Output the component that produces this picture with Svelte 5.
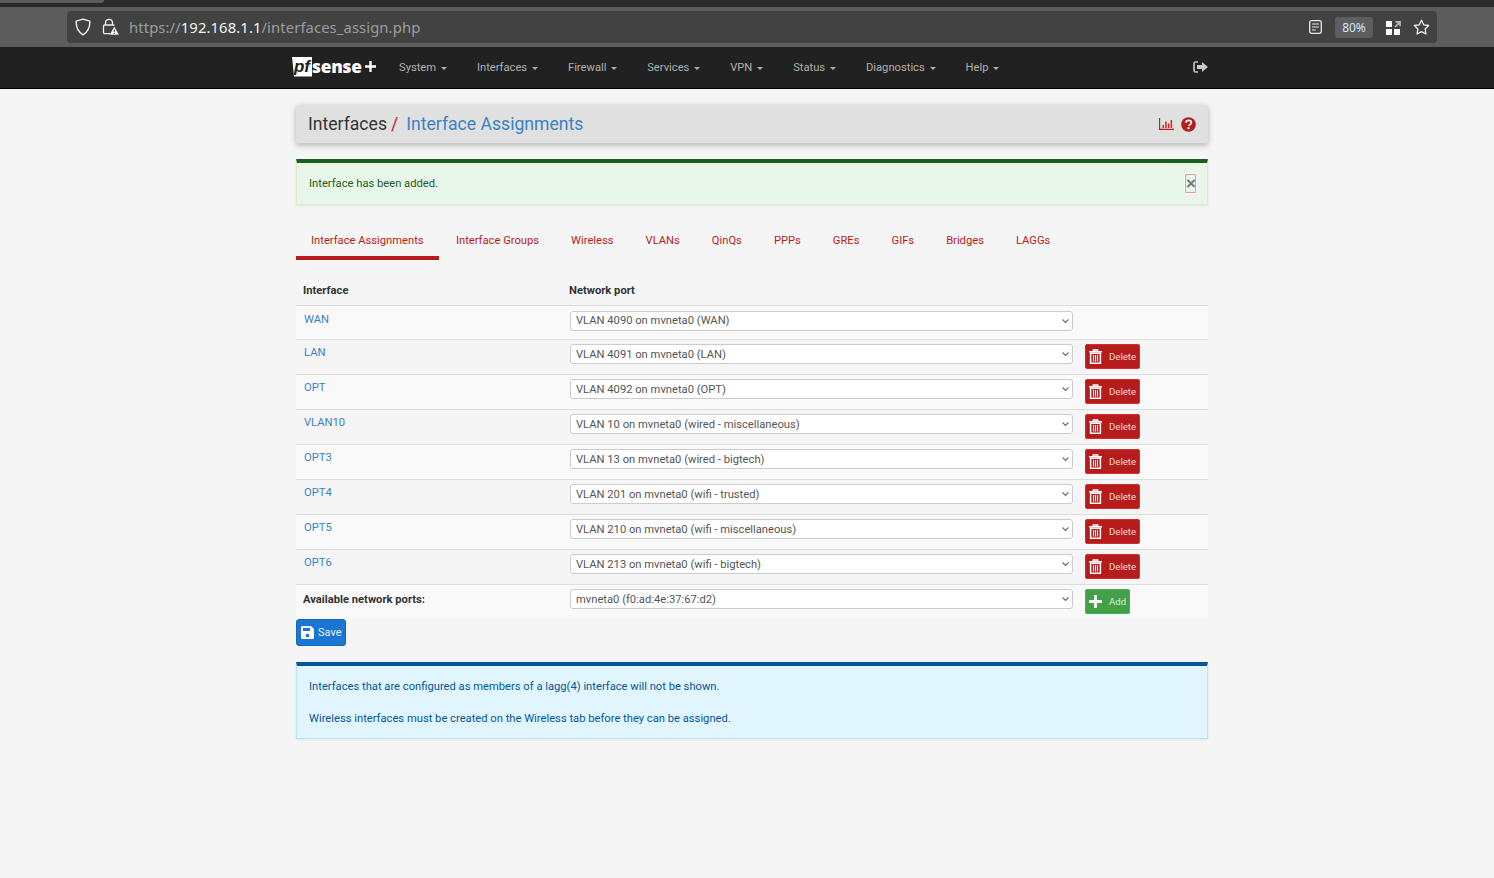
<script>
  const menus = ['System','Interfaces','Firewall','Services','VPN','Status','Diagnostics','Help'];
  const tabs = ['Interface Assignments','Interface Groups','Wireless','VLANs','QinQs','PPPs','GREs','GIFs','Bridges','LAGGs'];
  const rows = [
    ['WAN','VLAN 4090 on mvneta0 (WAN)',false],
    ['LAN','VLAN 4091 on mvneta0 (LAN)',true],
    ['OPT','VLAN 4092 on mvneta0 (OPT)',true],
    ['VLAN10','VLAN 10 on mvneta0 (wired - miscellaneous)',true],
    ['OPT3','VLAN 13 on mvneta0 (wired - bigtech)',true],
    ['OPT4','VLAN 201 on mvneta0 (wifi - trusted)',true],
    ['OPT5','VLAN 210 on mvneta0 (wifi - miscellaneous)',true],
    ['OPT6','VLAN 213 on mvneta0 (wifi - bigtech)',true]
  ];
</script>

{#snippet chevron()}
  <svg class="chev" width="7" height="4" viewBox="0 0 7 4"><path d="M.5.5 3.500 3.400 6.500.5" fill="none" stroke="#666" stroke-width="1.100"/></svg>
{/snippet}

{#snippet picker(text)}
  <div class="picker">
    <select><option>{text}</option></select>
    {@render chevron()}
  </div>
{/snippet}

<div class="browser">
  <div class="tabstrip"><div class="tab"></div></div>
  <div class="toolbar">
    <div class="urlbar">
      <svg class="ic-shield" width="16" height="18" viewBox="0 0 16 18"><path d="M8 1.200 14.800 3.200c.3 5.800-1.600 10.600-6.800 13.600C2.800 13.800.9 9 1.200 3.200Z" fill="none" stroke="#f2f2f2" stroke-width="1.400" stroke-linejoin="round"/></svg>
      <svg class="ic-lock" width="17" height="18" viewBox="0 0 17 18"><path d="M3.500 7V4.800a3.500 3.500 0 0 1 7 0V7M8 15.700H2.800c-.8 0-1.300-.5-1.300-1.300V8.300C1.500 7.500 2 7 2.800 7h8.400c.5 0 .9.200 1.100.6" fill="none" stroke="#f2f2f2" stroke-width="1.300"/><path d="M12.300 8.800 17 16.800H7.600Z" fill="#f2f2f2"/><path d="M12.300 11.500v2.600M12.300 14.900v1" stroke="#424242" stroke-width="1"/></svg>
      <div class="url"><span class="dim">https://</span><span class="host">192.168.1.1</span><span class="dim">/interfaces_assign.php</span></div>
      <svg class="ic-reader" width="13" height="14" viewBox="0 0 13 14"><rect x=".7" y=".7" width="11.600" height="12.600" rx="2" fill="none" stroke="#e8e8e8" stroke-width="1.300"/><path d="M3 4h7M3 7h7M3 10h4" stroke="#e8e8e8" stroke-width="1.200"/></svg>
      <div class="zoom">80%</div>
      <svg class="ic-apps" width="15" height="15" viewBox="0 0 15 15"><path fill="#fff" d="M0 1h6v6H0zM0 9h6v6H0zM8 9h6v6H8z"/><path d="M9 7l4-4M9.500 1.800H14v4.500" fill="none" stroke="#bbb" stroke-width="1.700"/></svg>
      <svg class="ic-star" width="17" height="16" viewBox="0 0 17 16"><path d="M8.500 1.200 10.700 5.800l5 .7-3.600 3.500.9 5-4.500-2.400L4 15l.9-5L1.300 6.500l5-.7Z" fill="none" stroke="#f0f0f0" stroke-width="1.300" stroke-linejoin="round"/></svg>
    </div>
  </div>
</div>

<nav class="navbar">
  <div class="navin">
    <div class="logo">
      <span class="pf">pf</span><span class="sense">sense</span><svg width="11" height="11" viewBox="0 0 11 11"><path d="M5.500 0v11M0 5.500h11" stroke="#fff" stroke-width="2.400"/></svg>
    </div>
    <ul class="menu">
      {#each menus as m}
        <li>{m}<i class="caret"></i></li>
      {/each}
    </ul>
    <svg class="logout" width="15" height="12" viewBox="0 0 15 12"><path d="M5 1H2.500C1.500 1 1 1.500 1 2.500v7c0 1 .5 1.500 1.500 1.500H5" fill="none" stroke="#b9c0c6" stroke-width="1.700"/><path d="M4 4h5V1l6 5-6 5V8H4Z" fill="#c8c8c8"/></svg>
  </div>
</nav>

<main>
  <header class="crumbs">
    <h1>Interfaces<span class="sl">/</span><a href="#a">Interface Assignments</a></h1>
    <div class="crumb-icons">
      <svg class="chart" width="15" height="12" viewBox="0 0 15 12"><path d="M.6 0v11.400H15" fill="none" stroke="#b71c1c" stroke-width="1.100"/><path d="M3.500 7h1.500v3H3.500zM6.200 3.500h1.500V10H6.200zM8.900 5.500h1.500V10H8.900zM11.600 2h1.500v8h-1.500z" fill="#c62828"/></svg>
      <svg width="15" height="15" viewBox="0 0 15 15"><circle cx="7.500" cy="7.500" r="7.300" fill="#b71c1c"/><path d="M4.900 5.700C5 4.200 6 3.300 7.600 3.300c1.600 0 2.700.9 2.700 2.200 0 1.100-.6 1.600-1.300 2.100-.6.400-.8.700-.8 1.300" fill="none" stroke="#fff" stroke-width="1.800"/><rect x="6.500" y="10.100" width="2" height="2" fill="#fff"/></svg>
    </div>
  </header>

  <div class="alert ok">
    <span>Interface has been added.</span>
    <button class="close" aria-label="close">×</button>
  </div>

  <ul class="tabs">
    {#each tabs as t, i}
      <li class:active={i === 0}>{t}</li>
    {/each}
  </ul>

  <table>
    <thead>
      <tr><th class="c1">Interface</th><th class="c2">Network port</th><th></th></tr>
    </thead>
    <tbody>
      {#each rows as r}
        <tr>
          <td class="c1 name"><a href="#a">{r[0]}</a></td>
          <td class="c2">{@render picker(r[1])}</td>
          <td class="c3">
            {#if r[2]}
              <button class="btn del">
                <svg width="13" height="15" viewBox="0 0 13 15"><path d="M0 2.700h13M4.300 2.700V1h4.400v1.700" fill="none" stroke="#fff" stroke-width="1.500"/><path d="M1.600 4.200h9.800v10H1.600z" fill="none" stroke="#fff" stroke-width="1.500"/><path d="M4.500 6v6.500M6.500 6v6.500M8.500 6v6.500" stroke="#fff" stroke-width="1.100"/></svg>
                <span>Delete</span>
              </button>
            {/if}
          </td>
        </tr>
      {/each}
      <tr class="avail">
        <td class="c1"><b>Available network ports:</b></td>
        <td class="c2">{@render picker('mvneta0 (f0:ad:4e:37:67:d2)')}</td>
        <td class="c3">
          <button class="btn add">
            <svg width="13" height="13" viewBox="0 0 13 13"><path d="M6.500 0v13M0 6.500h13" stroke="#fff" stroke-width="2.800"/></svg>
            <span>Add</span>
          </button>
        </td>
      </tr>
    </tbody>
  </table>

  <button class="btn save">
    <svg width="13" height="13" viewBox="0 0 13 13"><path fill="#fff" fill-rule="evenodd" d="M1.500 0H10l3 3v8.500c0 .9-.6 1.500-1.500 1.500h-10C.6 13 0 12.400 0 11.500v-10C0 .6.600 0 1.500 0ZM2 2v3h7V2Zm4.500 5.800a1.800 1.800 0 1 0 0 3.600 1.800 1.800 0 0 0 0-3.600Z"/></svg>
    <span>Save</span>
  </button>

  <div class="alert info">
    <p>Interfaces that are configured as members of a lagg(4) interface will not be shown.</p>
    <p>Wireless interfaces must be created on the Wireless tab before they can be assigned.</p>
  </div>
</main>

<style>
  :global(body) { margin: 0; background: #f5f5f5; font-family: Roboto, "Liberation Sans", sans-serif; font-size: 11.200px; color: #333; min-height: 878px; overflow: hidden; }
  :global(*) { box-sizing: border-box; }

  .browser { height: 47px; background: #5c5c5c; display: flex; flex-direction: column; }
  .tabstrip { height: 7px; background: #2b2a2c; }
  .tab { width: 104px; height: 3px; background: #5c5c5c; border-radius: 0 0 3px 0; }
  .toolbar { flex: 1; padding: 4px 57px 4px 67px; }
  .urlbar { height: 32px; background: #424242; border-radius: 4px; display: flex; align-items: center; padding-left: 8px; padding-right: 7px; }
  .ic-shield { margin-right: 11px; }
  .ic-lock { margin-right: 10px; }
  .url { flex: 1; font-family: "Noto Sans", sans-serif; font-size: 14.800px; letter-spacing: 0.1px; }
  .dim { color: #9a9ea3; }
  .host { color: #f4f4f4; }
  .ic-reader { margin-right: -1px; }
  .zoom { margin: 0 13px 0 14px; width: 38px; height: 21px; border-radius: 3px; background: #5e5e60; color: #d3e4f5; font-family: "Noto Sans", sans-serif; font-size: 12px; line-height: 21px; text-align: center; }
  .ic-apps { margin-right: 12px; }

  .navbar { height: 42px; background: #212121; border-bottom: 1px solid #000; }
  .navin { width: 912px; margin-left: 292px; display: flex; align-items: center; height: 41px; position: relative; }
  .logo { display: flex; align-items: center; width: 107px; color: #fff; padding-bottom: 2px; }
  .pf { background: #fff; color: #212121; font: italic 700 17px/20px "Liberation Sans", sans-serif; width: 20px; height: 20px; text-align: center; clip-path: polygon(0 0, 100% 0, 100% 100%, 10% 100%); }
  .sense { font: 800 17.300px/20px "Open Sans", sans-serif; color: #fff; margin-right: 3px; letter-spacing: -0.2px; }
  .menu { list-style: none; margin: 0; padding: 0; display: flex; gap: 29.800px; color: #b0b0b0; font-size: 11.200px; }
  .menu li { display: flex; align-items: center; }
  .caret { display: inline-block; margin-left: 5px; margin-top: 1px; border-top: 3px solid #b0b0b0; border-left: 3px solid transparent; border-right: 3px solid transparent; }
  .logout { position: absolute; right: -4px; top: 14px; }

  main { width: 912px; margin-left: 296px; }
  .crumbs { margin-top: 16px; height: 38px; background: #e0e0e0; border-radius: 2px; box-shadow: 0 2px 6px rgba(0,0,0,.28); display: flex; align-items: center; justify-content: space-between; padding: 0 12px; }
  h1 { margin: 0; font-size: 17.600px; font-weight: 400; color: #333; }
  .sl { color: #b71c1c; margin: 0 8px 0 4px; }
  h1 a { color: #3b82c4; text-decoration: none; }
  .crumb-icons { display: flex; align-items: flex-start; gap: 7px; padding-top: 1px; }
  .chart { margin-top: 1px; }

  .alert { border: 1px solid; border-top-width: 4px; }
  .ok { margin-top: 16px; height: 46px; background: #e8f5e9; border-color: #dcedc8; border-top-color: #1b5e20; color: #1b5e20; display: flex; align-items: center; justify-content: space-between; padding: 0 11px 0 12px; box-shadow: 0 1px 2px rgba(0,0,0,.08); }
  .close { width: 11px; height: 19px; padding: 0; background: #e8f5e9; border: 1px solid #e99a85; color: #777; font: 700 17px/15px "Liberation Sans", sans-serif; box-shadow: 0 0 0 1px #fff; }

  .tabs { list-style: none; margin: 16px 0 0; padding: 0; display: flex; color: #b71c1c; font-size: 11.200px; height: 39px; }
  .tabs li { padding: 13px 16px 0; height: 39px; line-height: 14px; }
  .tabs li.active { border-bottom: 4px solid #b71c1c; padding: 13px 15px 0; margin-right: 1.300px; }

  table { margin-top: 15px; width: 912px; border-collapse: collapse; table-layout: fixed; background: #f5f5f5; }
  th { text-align: left; height: 30px; font-weight: 700; font-size: 11.200px; color: #333; border-bottom: 1px solid #ddd; padding: 2px 0 0 7px; }
  th.c2 { padding-left: 5px; }
  th:nth-child(1) { width: 268px; }
  th:nth-child(2) { width: 521px; }
  td { border-top: 1px solid #ddd; height: 35px; padding: 0; vertical-align: top; }
  tbody tr:first-child td { height: 34px; border-top: none; }
  tbody tr:nth-child(odd) { background: #f9f9f9; }
  .avail td { height: 35px; }
  .name { padding: 6px 0 0 8px; line-height: 14px; }
  .name a { color: #3b82c4; text-decoration: none; }
  tbody tr:first-child .name { padding-top: 7px; }
  .c1 b { display: block; padding: 8px 0 0 7px; line-height: 14px; font-weight: 700; }
  td.c2 { padding: 4px 0 0 6px; }
  tbody tr:first-child td.c2 { padding-top: 5px; }
  .picker { position: relative; width: 503px; height: 20px; }
  select { appearance: none; width: 100%; height: 100%; padding: 1px 5px 0; background: #fff; border: 1px solid #ccc; border-radius: 3px; font-family: Roboto, sans-serif; font-size: 11.200px; color: #555; outline: none; }
  tbody tr:first-child select { padding-top: 0; }
  .chev { position: absolute; right: 4px; top: 8px; pointer-events: none; }
  td.c3 { padding: 4px 0 0; }

  .btn { display: inline-flex; align-items: center; border-radius: 2px; color: #fff; font-family: Roboto, sans-serif; padding: 0; border: 1px solid; }
  .del { width: 55px; height: 25px; background: #b71c1c; border-color: #d32f2f; font-size: 9.600px; padding-left: 3px; gap: 7px; color: #f8dada; }
  .add { width: 45px; height: 25px; background: #43a047; border-color: #4caf50; font-size: 9.600px; padding-left: 3px; gap: 7px; color: #d8f0d8; }
  .save { display: flex; margin-top: 0; width: 50px; height: 27px; background: #1976d2; border-color: #1565c0; font-size: 11px; padding-left: 4px; gap: 4px; border-radius: 3px; color: #eaf3fc; }

  .info { margin-top: 16px; height: 77px; background: #e1f5fe; border-color: #b3e5fc; border-top-color: #01579b; color: #01579b; padding: 14px 12px 0; box-shadow: 0 1px 2px rgba(0,0,0,.08); }
  p { margin: 0 0 18px; line-height: 14px; }
</style>
